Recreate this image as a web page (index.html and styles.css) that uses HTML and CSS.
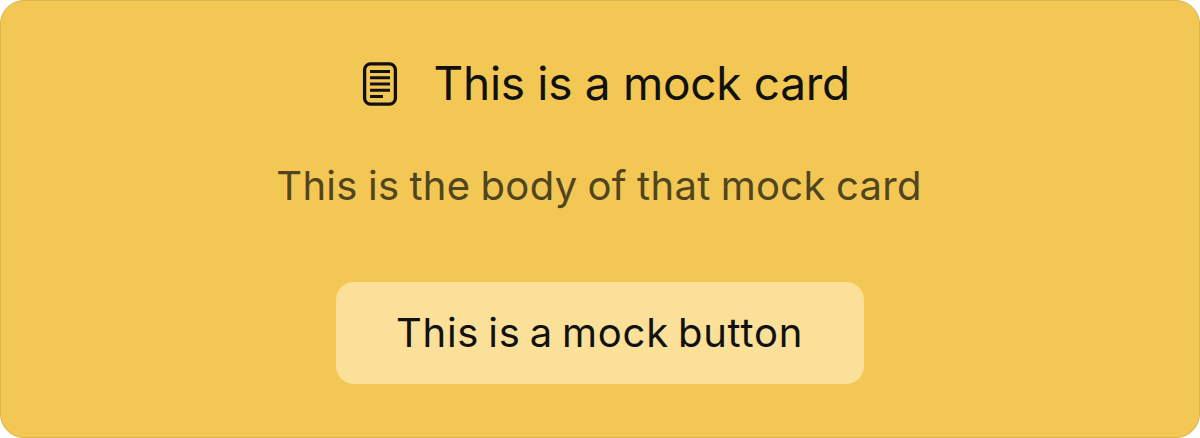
FILE: index.html
```html
<!DOCTYPE html>
<html lang="en">
<head>
<meta charset="utf-8">
<title>Mock card</title>
<link rel="stylesheet" href="styles.css">
</head>
<body>
<main class="card">
  <header class="card-header">
    <svg class="card-icon" width="36" height="44" viewBox="0 0 36 44" fill="none" stroke="currentColor" stroke-width="3">
      <rect x="2.6" y="1.8" width="30.8" height="40.4" rx="6" stroke-width="3.3"/>
      <path d="M8 9.500h20M8 15.700h20M8 22h20M8 28.200h20M8 34.500h13"/>
    </svg>
    <h1 class="card-title">This is a mock card</h1>
  </header>
  <p class="card-body">This is the body of that mock card</p>
  <button class="card-button" type="button">This is a mock button</button>
</main>
</body>
</html>
```

FILE: styles.css
```css
body {
  margin: 0;
  background: #fff;
  font-family: Inter, "Liberation Sans", sans-serif;
}

.card {
  box-sizing: border-box;
  height: 438px;
  padding-top: 54px;
  display: flex;
  flex-direction: column;
  align-items: center;
  color: #111;
  background: #f3c753;
  border: 1px solid #d9b44b;
  border-radius: 24px;
}

.card-header {
  display: flex;
  align-items: center;
  gap: 35.6px;
  height: 58px;
  padding-left: 11.9px;
}

.card-title {
  margin: 0;
  padding-bottom: 2px;
  font-size: 46px;
  line-height: 56px;
  font-weight: 400;
  letter-spacing: -0.3px;
  white-space: nowrap;
}

.card-body {
  margin: 48px 2px 0 0;
  font-size: 40px;
  line-height: 50px;
  letter-spacing: 0.3px;
  word-spacing: -1.4px;
  color: #50451f;
  white-space: nowrap;
}

.card-button {
  margin-top: 71px;
  width: 528px;
  height: 102px;
  padding: 0 1px 0 0;
  border: 0;
  border-radius: 18px;
  background: #fbe09a;
  color: #111;
  font: 400 40px/50px Inter, "Liberation Sans", sans-serif;
  letter-spacing: 0.75px;
  word-spacing: -2.9px;
}
```
